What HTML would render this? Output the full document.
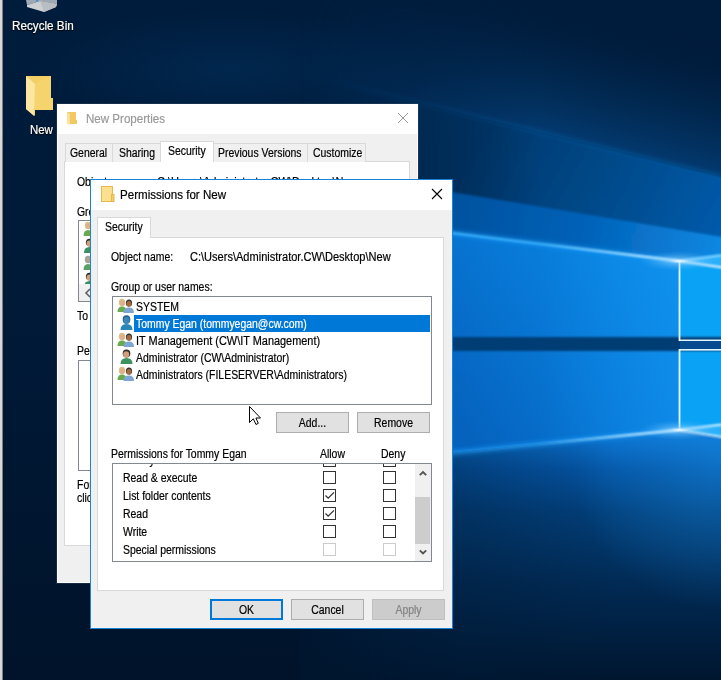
<!DOCTYPE html>
<html><head><meta charset="utf-8">
<style>
*{margin:0;padding:0;box-sizing:border-box}
html,body{width:721px;height:680px;overflow:hidden;background:#001a38}
body{position:relative;font-family:"Liberation Sans",sans-serif;font-size:12px;color:#000}
.a{position:absolute}
.t{position:absolute;white-space:nowrap;line-height:14px;font-size:12px;-webkit-text-stroke:0.2px currentColor;transform:scaleX(0.87);transform-origin:0 0}
.tt{font-size:13px;line-height:16px;transform:scaleX(0.89)}
.tl{transform:scaleX(0.95)}
#bg{position:absolute;left:0;top:0}
.btn{position:absolute;background:#e1e1e1;border:1px solid #adadad;height:21px;width:73px}
.bt{position:absolute;-webkit-text-stroke:0.2px currentColor;left:0;right:0;top:3px;text-align:center;line-height:14px;white-space:nowrap;transform:scaleX(0.87)}
.cb{position:absolute;width:13px;height:13px;border:1px solid #333;background:#fff}
.cb svg{position:absolute;left:0;top:0}
.cbd{border-color:#cccccc}
</style></head>
<body>
<svg id="bg" width="721" height="680" viewBox="0 0 721 680">
  <defs>
    <linearGradient id="g0" x1="0" y1="0" x2="0" y2="1">
      <stop offset="0" stop-color="#001c3c"/>
      <stop offset="0.45" stop-color="#001a38"/>
      <stop offset="1" stop-color="#00132a"/>
    </linearGradient>
    <linearGradient id="gsky" gradientUnits="userSpaceOnUse" x1="581" y1="8" x2="550" y2="134">
      <stop offset="0" stop-color="#001c3c" stop-opacity="0"/>
      <stop offset="0.5" stop-color="#012a52" stop-opacity="0.7"/>
      <stop offset="1" stop-color="#033a70"/>
    </linearGradient>
    <linearGradient id="gb1" gradientUnits="userSpaceOnUse" x1="480" y1="130" x2="720" y2="260">
      <stop offset="0" stop-color="#03386c"/>
      <stop offset="0.5" stop-color="#044a8a"/>
      <stop offset="1" stop-color="#065cae"/>
    </linearGradient>
    <linearGradient id="gb2" gradientUnits="userSpaceOnUse" x1="452" y1="200" x2="721" y2="250">
      <stop offset="0" stop-color="#03519e"/>
      <stop offset="0.5" stop-color="#0562b8"/>
      <stop offset="1" stop-color="#0a88e2"/>
    </linearGradient>
    <linearGradient id="gwall" gradientUnits="userSpaceOnUse" x1="452" y1="420" x2="679" y2="260">
      <stop offset="0" stop-color="#0562bd"/>
      <stop offset="0.5" stop-color="#0878d6"/>
      <stop offset="1" stop-color="#0a8ae6"/>
    </linearGradient>
    <linearGradient id="gfloor" gradientUnits="userSpaceOnUse" x1="0" y1="440" x2="0" y2="680">
      <stop offset="0" stop-color="#0a70cc"/>
      <stop offset="0.12" stop-color="#0454a4"/>
      <stop offset="0.3" stop-color="#023f7a"/>
      <stop offset="0.6" stop-color="#012a54"/>
      <stop offset="1" stop-color="#00162f"/>
    </linearGradient>
    <linearGradient id="gfloorx" gradientUnits="userSpaceOnUse" x1="460" y1="0" x2="721" y2="0">
      <stop offset="0" stop-color="#001a36" stop-opacity="0.35"/>
      <stop offset="0.6" stop-color="#001a36" stop-opacity="0"/>
    </linearGradient>
    <radialGradient id="gglow" gradientUnits="userSpaceOnUse" cx="721" cy="460" r="150">
      <stop offset="0" stop-color="#1a90e8" stop-opacity="0.45"/>
      <stop offset="1" stop-color="#1a90e8" stop-opacity="0"/>
    </radialGradient>
    <linearGradient id="gfade" gradientUnits="userSpaceOnUse" x1="300" y1="0" x2="540" y2="0">
      <stop offset="0" stop-color="#fff" stop-opacity="0"/>
      <stop offset="1" stop-color="#fff" stop-opacity="1"/>
    </linearGradient>
    <mask id="mfade" maskUnits="userSpaceOnUse" x="0" y="0" width="721" height="680">
      <rect x="0" y="0" width="721" height="680" fill="url(#gfade)"/>
    </mask>
    <linearGradient id="gfl" gradientUnits="userSpaceOnUse" x1="440" y1="0" x2="560" y2="0">
      <stop offset="0" stop-color="#001a36" stop-opacity="1"/>
      <stop offset="1" stop-color="#001a36" stop-opacity="0"/>
    </linearGradient>
    <filter id="bl1"><feGaussianBlur stdDeviation="1"/></filter>
    <filter id="bl2"><feGaussianBlur stdDeviation="2"/></filter>
    <filter id="bl6"><feGaussianBlur stdDeviation="6"/></filter>
  <linearGradient id="gflm" gradientUnits="userSpaceOnUse" x1="300" y1="0" x2="460" y2="0">
      <stop offset="0" stop-color="#fff" stop-opacity="0"/>
      <stop offset="1" stop-color="#fff" stop-opacity="1"/>
    </linearGradient>
    <mask id="mfl" maskUnits="userSpaceOnUse" x="0" y="0" width="721" height="680">
      <rect x="0" y="0" width="721" height="680" fill="url(#gflm)"/>
    </mask>
  <radialGradient id="gspot" cx="0.5" cy="0.5" r="0.5">
      <stop offset="0" stop-color="#ffffff" stop-opacity="0.9"/>
      <stop offset="0.25" stop-color="#9ad8ff" stop-opacity="0.5"/>
      <stop offset="1" stop-color="#40b0ff" stop-opacity="0"/>
    </radialGradient>
    <linearGradient id="gwallr" gradientUnits="userSpaceOnUse" x1="540" y1="0" x2="679" y2="0">
      <stop offset="0" stop-color="#18a0ff" stop-opacity="0"/>
      <stop offset="1" stop-color="#18a0ff" stop-opacity="0.35"/>
    </linearGradient>
  <linearGradient id="gline" gradientUnits="userSpaceOnUse" x1="540" y1="0" x2="679" y2="0">
      <stop offset="0" stop-color="#e8f8ff" stop-opacity="0"/>
      <stop offset="1" stop-color="#ffffff" stop-opacity="1"/>
    </linearGradient>
  <radialGradient id="gsmoke" cx="0.5" cy="0.5" r="0.5">
      <stop offset="0" stop-color="#03386a" stop-opacity="0.4"/>
      <stop offset="1" stop-color="#03386a" stop-opacity="0"/>
    </radialGradient>
  <linearGradient id="gfline" gradientUnits="userSpaceOnUse" x1="452" y1="0" x2="679" y2="0">
      <stop offset="0" stop-color="#30a8ff" stop-opacity="0.35"/>
      <stop offset="1" stop-color="#50c0ff" stop-opacity="1"/>
    </linearGradient>
  </defs>
  <rect width="721" height="680" fill="url(#g0)"/>
  <ellipse cx="230" cy="70" rx="200" ry="60" fill="url(#gsmoke)"/>
  <g mask="url(#mfade)">
    <polygon points="300,0 721,0 721,176 300,74" fill="url(#gsky)"/>
    <polygon points="300,74 740,181 740,300 300,300" fill="url(#gb1)" filter="url(#bl1)"/>
    <polyline points="300,74 721,176" stroke="#0a5aa0" stroke-width="2" fill="none" filter="url(#bl2)"/>
  </g>
  <polygon points="380,180 740,240 740,300 380,300" fill="url(#gb2)" filter="url(#bl1)"/>
  <polygon points="380,224 679,261 679,430 380,460" fill="url(#gwall)"/>
  <polygon points="380,224 679,261 679,430 380,460" fill="url(#gwallr)"/>
  <polygon points="679,261 721,255 721,425 679,430" fill="#0aa2f4"/><polygon points="679,261 740,253 740,270" fill="#40b8ff" opacity="0.6"/>
  <rect x="380" y="337" width="360" height="14" fill="#033c74" filter="url(#bl1)"/>
  <rect x="679" y="339.5" width="42" height="1.6" fill="#e0f6ff"/>
  <rect x="679" y="349" width="42" height="1.6" fill="#e0f6ff"/>
  <rect x="680" y="341" width="41" height="8" fill="#064a90"/>
  <polygon points="300,468 679,430 740,440 740,680 300,680" fill="url(#gfloor)" mask="url(#mfl)"/>
  <polygon points="679,430 740,422 740,440" fill="#2ab0fa"/>
  <polygon points="300,468 679,430 721,437 721,680 300,680" fill="url(#gfloorx)"/>
  <polygon points="452,458 679,430 721,437 721,680 452,680" fill="url(#gglow)"/>
  
  <polyline points="380,224 679,261" stroke="#1a9cff" stroke-width="6" fill="none" opacity="0.45" filter="url(#bl2)"/>
  <polyline points="380,224 679,261 721,255" stroke="#40b8ff" stroke-width="2" fill="none" filter="url(#bl1)"/>
  <polyline points="520,241 679,261" stroke="url(#gline)" stroke-width="1.8" fill="none" filter="url(#bl1)"/><polyline points="679,261 740,253" stroke="#a8e0ff" stroke-width="1.4" fill="none" filter="url(#bl1)"/>
  <polyline points="679,261 740,270" stroke="#f0faff" stroke-width="2" fill="none" filter="url(#bl1)"/>
  <line x1="679.5" y1="261" x2="679.5" y2="341" stroke="#e8f8ff" stroke-width="1.8"/>
  <line x1="679.5" y1="349" x2="679.5" y2="430" stroke="#e8f8ff" stroke-width="1.8"/>
  <polyline points="380,460 679,430" stroke="#1a9cff" stroke-width="6" fill="none" opacity="0.45" filter="url(#bl2)"/>
  <polyline points="380,460 679,430" stroke="url(#gfline)" stroke-width="2" fill="none" filter="url(#bl1)"/><polyline points="679,430 721,425" stroke="#50c0ff" stroke-width="2" fill="none" filter="url(#bl1)"/>
  <polyline points="520,446 679,430" stroke="url(#gline)" stroke-width="1.8" fill="none" filter="url(#bl1)"/><polyline points="679,430 740,422" stroke="#e0f6ff" stroke-width="1.6" fill="none" filter="url(#bl1)"/>
  <polyline points="679,430 740,440" stroke="#e8f8ff" stroke-width="1.8" fill="none" filter="url(#bl1)"/>
  <ellipse cx="679" cy="261" rx="40" ry="10" fill="url(#gspot)"/>
  <ellipse cx="679" cy="430" rx="40" ry="10" fill="url(#gspot)"/>
</svg>

<!-- left edge strip -->
<div class="a" style="left:0;top:0;width:2px;height:680px;background:#d8d8d8"></div>
<div class="a" style="left:2px;top:0;width:1px;height:680px;background:#808080"></div>

<!-- desktop icons -->
<svg class="a" style="left:0;top:0" width="80" height="140" viewBox="0 0 80 140">
  <polygon points="26,0 57,0 57,4 40,1 27,5" fill="#9fa9b4"/><rect x="36" y="0" width="2" height="1.5" fill="#3a8ad8"/>
  <polygon points="27,5 40,1 57,4 56,7 44,12 27,7" fill="#cdd0d3"/><polygon points="40,1 57,4 56,7 44,12" fill="#b9bec3"/>
  <polygon points="26,76 51,76 51,98 53,98 53,110 35,110 35,116 26,109" fill="#f3cf66"/>
  <polygon points="35,84 51,76 51,98 53,98 53,110 34,110" fill="#f5d46e"/>
  <polygon points="26,76 35,84 34,116 26,109" fill="#fde5a2"/>
</svg>
<div class="t tl" style="left:12px;top:19px;transform:scaleX(0.975);color:#fff;text-shadow:0 0 2px #000,0 1px 1px #000">Recycle Bin</div>
<div class="t tl" style="left:30px;top:123px;color:#fff;text-shadow:0 0 2px #000,0 1px 1px #000">New</div>

<!-- ============ New Properties window (inactive) ============ -->
<div class="a" style="left:56px;top:103px;width:363px;height:481px;background:rgba(60,80,100,0.35)"></div>
<div class="a" style="left:57px;top:104px;width:361px;height:479px;background:#f0f0f0;border:1px solid #fff;"></div>
<div class="a" style="left:57px;top:104px;width:361px;height:30px;background:#fff"></div>
<svg class="a" style="left:67px;top:112px" width="11" height="13" viewBox="0 0 11 13">
  <polygon points="0,0 9,0 9,8 10,8 10,12 3,12 3,13 0,11" fill="#f1c862"/>
  <polygon points="0,0 3,2 3,13 0,11" fill="#fbe09a"/>
</svg>
<div class="t tt" style="left:86px;top:111px;color:#999">New Properties</div>
<svg class="a" style="left:398px;top:113px" width="10" height="10" viewBox="0 0 10 10"><path d="M0,0L10,10M10,0L0,10" stroke="#999" stroke-width="1"/></svg>

<div class="a" style="left:64px;top:161px;width:346px;height:385px;background:#fff;border:1px solid #d9d9d9"></div>
<div class="a" style="left:65px;top:143px;width:48px;height:19px;background:#f0f0f0;border:1px solid #d9d9d9;border-bottom:none"></div>
<div class="a" style="left:112px;top:143px;width:49px;height:19px;background:#f0f0f0;border:1px solid #d9d9d9;border-bottom:none"></div>
<div class="a" style="left:212px;top:143px;width:96px;height:19px;background:#f0f0f0;border:1px solid #d9d9d9;border-bottom:none"></div>
<div class="a" style="left:307px;top:143px;width:59px;height:19px;background:#f0f0f0;border:1px solid #d9d9d9;border-bottom:none"></div>
<div class="a" style="left:160px;top:141px;width:54px;height:21px;background:#fff;border:1px solid #d9d9d9;border-bottom:none"></div>
<div class="t" style="left:70px;top:146px">General</div>
<div class="t" style="left:119px;top:146px">Sharing</div>
<div class="t" style="left:168px;top:144px">Security</div>
<div class="t" style="left:218px;top:146px">Previous Versions</div>
<div class="t" style="left:313px;top:146px">Customize</div>
<div class="t" style="left:77px;top:175px">Object name:</div>
<div class="t" style="left:157px;top:175px;transform:scaleX(0.92)">C:\Users\Administrator.CW\Desktop\New</div>
<div class="t" style="left:77px;top:205px">Group or user names:</div>
<div class="a" style="left:78px;top:220px;width:40px;height:82px;border:1px solid #828790;background:#fff"></div>
<svg class="a" style="left:83px;top:221px" width="7" height="68" viewBox="0 0 7 68">
  <ellipse cx="5" cy="4.5" rx="3.2" ry="3.8" fill="#d9bf85"/><ellipse cx="5.5" cy="5" rx="2.3" ry="2.8" fill="#e0b08a"/>
  <path d="M0.5,15 Q0.5,9 5,9 Q9.5,9 9.5,15 Z" fill="#6aaa4e"/>
  <ellipse cx="6.5" cy="21.5" rx="3.6" ry="3.8" fill="#2a2a2a"/><ellipse cx="6.3" cy="22.6" rx="2.8" ry="3.1" fill="#d1a07a"/>
  <path d="M1,32 Q1,26 6.5,26 Q12,26 12,32 Z" fill="#3c9160"/>
  <ellipse cx="5" cy="38.5" rx="3.2" ry="3.8" fill="#9aa4a4"/><ellipse cx="5.5" cy="39" rx="2.3" ry="2.8" fill="#b0a090"/>
  <path d="M0.5,49 Q0.5,43 5,43 Q9.5,43 9.5,49 Z" fill="#5aa060"/>
  <ellipse cx="6.5" cy="55.5" rx="3.6" ry="3.8" fill="#2a2a2a"/><ellipse cx="6.3" cy="56.6" rx="2.8" ry="3.1" fill="#d1a07a"/>
  <path d="M1,66 Q1,60 6.5,60 Q12,60 12,66 Z" fill="#3c9160"/>
</svg>
<div class="a" style="left:79px;top:284px;width:40px;height:17px;background:#f0f0f0"></div>
<svg class="a" style="left:84px;top:288px" width="8" height="10" viewBox="0 0 8 10"><path d="M6,1L2,5L6,9" stroke="#606060" stroke-width="1.6" fill="none"/></svg>
<div class="t" style="left:77px;top:309px">To change permissions, click Edit.</div>
<div class="t" style="left:77px;top:344px">Permissions for SYSTEM</div>
<div class="a" style="left:78px;top:360px;width:40px;height:111px;border:1px solid #828790;background:#fff"></div>
<div class="t" style="left:77px;top:478px">For special permissions or advanced settings,</div>
<div class="t" style="left:77px;top:491px">click Advanced.</div>

<!-- ============ Permissions for New dialog (active) ============ -->
<div class="a" style="left:90px;top:179px;width:363px;height:450px;background:#f0f0f0;border:1px solid #1883d7"></div>
<div class="a" style="left:91px;top:180px;width:361px;height:30px;background:#fff"></div>
<svg class="a" style="left:101px;top:186px" width="14" height="16" viewBox="0 0 14 16">
  <rect x="0.5" y="0.5" width="11" height="15" fill="#fbe08f" stroke="#e5b94c" stroke-width="1"/>
  <rect x="10.5" y="8.5" width="2.5" height="7" fill="#f3cd63" stroke="#e5b94c" stroke-width="1"/>
</svg>
<div class="t tt" style="left:120px;top:187px">Permissions for New</div>
<svg class="a" style="left:431px;top:188px" width="12" height="12" viewBox="0 0 12 12"><path d="M1,1L11,11M11,1L1,11" stroke="#000" stroke-width="1.1"/></svg>

<div class="a" style="left:97px;top:237px;width:347px;height:354px;background:#fff;border:1px solid #d9d9d9"></div>
<div class="a" style="left:97px;top:217px;width:54px;height:21px;background:#fff;border:1px solid #d9d9d9;border-bottom:none"></div>
<div class="t" style="left:105px;top:220px">Security</div>

<div class="t" style="left:111px;top:250px">Object name:</div>
<div class="t" style="left:190px;top:250px;transform:scaleX(0.92)">C:\Users\Administrator.CW\Desktop\New</div>
<div class="t" style="left:111px;top:280px">Group or user names:</div>

<div class="a" style="left:112px;top:296px;width:320px;height:109px;border:1px solid #828790;background:#fff"></div>
<div class="a" style="left:134px;top:315px;width:296px;height:17px;background:#0078d7"></div>
<svg class="a" style="left:117px;top:298px" width="18" height="84" viewBox="0 0 18 84">
  
  <g transform="translate(0,0)">
      <ellipse cx="5" cy="4.5" rx="3.2" ry="3.8" fill="#d9bf85"/>
      <ellipse cx="5.5" cy="5" rx="2.3" ry="2.8" fill="#e0b08a"/>
      <path d="M0.5,14 Q0.5,8.5 5,8.5 Q9.5,8.5 9.5,14 Z" fill="#6aaa4e"/>
      <ellipse cx="12" cy="5" rx="3.1" ry="3.6" fill="#333"/>
      <ellipse cx="12" cy="5.8" rx="2.5" ry="2.9" fill="#a36a3e"/>
      <path d="M6.5,15 Q6.5,9.5 12,9.5 Q17,9.5 17,15 Z" fill="#7ea6d4"/>
    </g>
  <g transform="translate(0,17)">
    <ellipse cx="9.5" cy="4.5" rx="3.8" ry="4.2" fill="#1f5f96"/>
    <ellipse cx="9.5" cy="5.5" rx="3" ry="3.4" fill="#3d86b8"/>
    <path d="M3.5,15 Q3.5,9 9.5,9 Q15.5,9 15.5,15 Z" fill="#2a86b6"/>
  </g>
  <g transform="translate(0,34)">
      <ellipse cx="5" cy="4.5" rx="3.2" ry="3.8" fill="#d9bf85"/>
      <ellipse cx="5.5" cy="5" rx="2.3" ry="2.8" fill="#e0b08a"/>
      <path d="M0.5,14 Q0.5,8.5 5,8.5 Q9.5,8.5 9.5,14 Z" fill="#6aaa4e"/>
      <ellipse cx="12" cy="5" rx="3.1" ry="3.6" fill="#333"/>
      <ellipse cx="12" cy="5.8" rx="2.5" ry="2.9" fill="#a36a3e"/>
      <path d="M6.5,15 Q6.5,9.5 12,9.5 Q17,9.5 17,15 Z" fill="#7ea6d4"/>
    </g>
  <g transform="translate(0,51)">
    <ellipse cx="9.5" cy="4.5" rx="3.8" ry="4" fill="#2a2a2a"/>
    <ellipse cx="9.2" cy="5.6" rx="3" ry="3.3" fill="#d1a07a"/>
    <path d="M3.5,15 Q3.5,9 9.5,9 Q15.5,9 15.5,15 Z" fill="#3c9160"/>
  </g>
  <g transform="translate(0,68)">
      <ellipse cx="5" cy="4.5" rx="3.2" ry="3.8" fill="#d9bf85"/>
      <ellipse cx="5.5" cy="5" rx="2.3" ry="2.8" fill="#e0b08a"/>
      <path d="M0.5,14 Q0.5,8.5 5,8.5 Q9.5,8.5 9.5,14 Z" fill="#6aaa4e"/>
      <ellipse cx="12" cy="5" rx="3.1" ry="3.6" fill="#333"/>
      <ellipse cx="12" cy="5.8" rx="2.5" ry="2.9" fill="#a36a3e"/>
      <path d="M6.5,15 Q6.5,9.5 12,9.5 Q17,9.5 17,15 Z" fill="#7ea6d4"/>
    </g>
</svg>
<div class="t" style="left:136px;top:300px">SYSTEM</div>
<div class="t" style="left:136px;top:317px;color:#fff">Tommy Egan (tommyegan@cw.com)</div>
<div class="t" style="left:136px;top:334px;transform:scaleX(0.91)">IT Management (CW\IT Management)</div>
<div class="t" style="left:136px;top:351px">Administrator (CW\Administrator)</div>
<div class="t" style="left:136px;top:368px">Administrators (FILESERVER\Administrators)</div>

<div class="btn" style="left:276px;top:412px"><span class="bt">Add...</span></div>
<div class="btn" style="left:357px;top:412px"><span class="bt">Remove</span></div>

<div class="t" style="left:111px;top:447px">Permissions for Tommy Egan</div>
<div class="t" style="left:320px;top:447px">Allow</div>
<div class="t" style="left:381px;top:447px">Deny</div>

<div class="a" style="left:112px;top:463px;width:320px;height:99px;border:1px solid #828790;background:#fff;overflow:hidden">
  <div class="t" style="left:11px;top:-11px">Modify</div>
  <div class="cb" style="left:210px;top:-10px"></div>
  <div class="cb" style="left:270px;top:-10px"></div>
</div>
<div class="t" style="left:123px;top:471px">Read &amp; execute</div>
<div class="t" style="left:123px;top:489px">List folder contents</div>
<div class="t" style="left:123px;top:507px">Read</div>
<div class="t" style="left:123px;top:525px">Write</div>
<div class="t" style="left:123px;top:543px">Special permissions</div>
<div class="cb" style="left:323px;top:471px"></div><div class="cb" style="left:383px;top:471px"></div>
<div class="cb" style="left:323px;top:489px"><svg width="11" height="11" viewBox="0 0 11 11"><path d="M1.5,5.5L4.2,8.2L10,2.4" stroke="#333" stroke-width="1.3" fill="none"/></svg></div><div class="cb" style="left:383px;top:489px"></div>
<div class="cb" style="left:323px;top:507px"><svg width="11" height="11" viewBox="0 0 11 11"><path d="M1.5,5.5L4.2,8.2L10,2.4" stroke="#333" stroke-width="1.3" fill="none"/></svg></div><div class="cb" style="left:383px;top:507px"></div>
<div class="cb" style="left:323px;top:525px"></div><div class="cb" style="left:383px;top:525px"></div>
<div class="cb cbd" style="left:323px;top:543px"></div><div class="cb cbd" style="left:383px;top:543px"></div>

<div class="a" style="left:415px;top:464px;width:16px;height:97px;background:#f0f0f0"></div>
<div class="a" style="left:415px;top:497px;width:15px;height:47px;background:#cdcdcd"></div>
<svg class="a" style="left:418px;top:469px" width="10" height="8" viewBox="0 0 10 8"><path d="M1.8,6.2L5,3L8.2,6.2" stroke="#555" stroke-width="1.9" fill="none"/></svg>
<svg class="a" style="left:418px;top:548px" width="10" height="8" viewBox="0 0 10 8"><path d="M1.8,2.3L5,5.5L8.2,2.3" stroke="#555" stroke-width="1.9" fill="none"/></svg>

<div class="btn" style="left:210px;top:599px;border:2px solid #0078d7"><span class="bt" style="top:2px">OK</span></div>
<div class="btn" style="left:291px;top:599px"><span class="bt">Cancel</span></div>
<div class="btn" style="left:372px;top:599px;background:#cccccc;border-color:#bfbfbf;color:#838383"><span class="bt">Apply</span></div>

<!-- cursor -->
<svg class="a" style="left:249px;top:406px" width="13" height="20" viewBox="0 0 13 20">
  <polygon points="0.5,0.5 0.5,16.5 4.3,12.8 7,18.5 9.3,17.3 6.9,12 11.5,12" fill="#fff" stroke="#000" stroke-width="1" stroke-linejoin="miter"/>
</svg>

</body></html>
